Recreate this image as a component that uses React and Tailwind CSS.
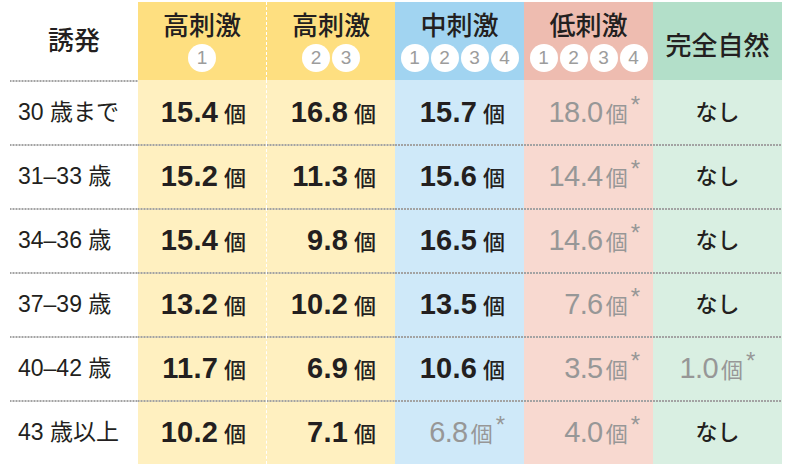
const font = { fontFamily: '"Liberation Sans", "Noto Sans CJK JP", sans-serif' };

const cols = [
  { title: "高刺激", nums: ["1"], head: "bg-[#fedf80]", body: "bg-[#fff0c0]", cell: "justify-end pr-[20px] border-r border-dashed border-white" },
  { title: "高刺激", nums: ["2", "3"], head: "bg-[#fedf80]", body: "bg-[#fff0c0]", cell: "justify-end pr-[19px]" },
  { title: "中刺激", nums: ["1", "2", "3", "4"], head: "bg-[#a1d4f1]", body: "bg-[#cfe9f9]", cell: "justify-end pr-[19px]" },
  { title: "低刺激", nums: ["1", "2", "3", "4"], head: "bg-[#eebcb0]", body: "bg-[#f8d9d0]", cell: "justify-end pr-[13px]" },
  { title: "完全自然", nums: [], head: "bg-[#b3dfc9]", body: "bg-[#d9efe2]", cell: "justify-center" },
];

// g: gray value with asterisk
const rows = [
  ["30 歳まで", "15.4", "16.8", "15.7", "g18.0", "なし"],
  ["31–33 歳", "15.2", "11.3", "15.6", "g14.4", "なし"],
  ["34–36 歳", "15.4", "9.8", "16.5", "g14.6", "なし"],
  ["37–39 歳", "13.2", "10.2", "13.5", "g7.6", "なし"],
  ["40–42 歳", "11.7", "6.9", "10.6", "g3.5", "g1.0"],
  ["43 歳以上", "10.2", "7.1", "g6.8", "g4.0", "なし"],
];

const dots =
  "bg-[linear-gradient(to_right,#a3a3a3_2px,transparent_2px)] bg-[length:3px_2px] bg-repeat-x";

function Value({ v }) {
  if (v === "なし") {
    return <span className="text-[22px] font-medium text-[#231f20]">なし</span>;
  }
  if (v.startsWith("g")) {
    return (
      <span className="flex items-start text-[#979797]">
        <span className="flex items-baseline">
          <span className="text-[29px] tracking-[-0.6px] leading-none">{v.slice(1)}</span>
          <span className="ml-[3px] text-[22px] leading-none">個</span>
        </span>
        <span className="ml-[3px] -mt-[5px] text-[24px] leading-none">*</span>
      </span>
    );
  }
  return (
    <span className="flex items-baseline text-[#231f20]">
      <span className="text-[29px] font-bold tracking-[0.2px] leading-none">{v}</span>
      <span className="ml-[6px] text-[22px] font-medium leading-none">個</span>
    </span>
  );
}

export default function App() {
  return (
    <div className="w-[789px] h-[472px] bg-white pt-[2px] pl-[10px]" style={font}>
      <div className="grid grid-cols-[128px_129px_128px_129px_129px_129px]">
        {/* header */}
        <div className="h-[78px] flex items-center justify-center text-[26px] font-medium text-[#231f20]">
          誘発
        </div>
        {cols.map((c, i) => (
          <div
            key={i}
            className={`h-[78px] flex flex-col items-center ${c.head} ${
              c.nums.length ? "pt-[8px]" : "justify-center pt-[10px]"
            } ${i === 0 ? "border-r border-dashed border-white" : ""}`}
          >
            <span className="text-[26px] font-medium leading-[32px] text-[#231f20]">{c.title}</span>
            {c.nums.length > 0 && (
              <div className="mt-[2px] flex gap-[2px]">
                {c.nums.map((n) => (
                  <span
                    key={n}
                    className="w-[28px] h-[28px] rounded-full bg-white flex items-center justify-center text-[19px] text-[#9c9c9c]"
                  >
                    {n}
                  </span>
                ))}
              </div>
            )}
          </div>
        ))}

        {/* body */}
        {rows.map((r, ri) => (
          <div key={ri} className="contents">
            <div className={`h-[64px] flex items-center pl-[8px] text-[23px] text-[#231f20] ${dots} bg-top`}>
              {r[0]}
            </div>
            {cols.map((c, ci) => (
              <div
                key={ci}
                className={`h-[64px] flex items-center ${c.body} ${c.cell} ${ri > 0 ? `${dots} bg-top` : ""}`}
              >
                <Value v={r[ci + 1]} />
              </div>
            ))}
          </div>
        ))}
      </div>
    </div>
  );
}
